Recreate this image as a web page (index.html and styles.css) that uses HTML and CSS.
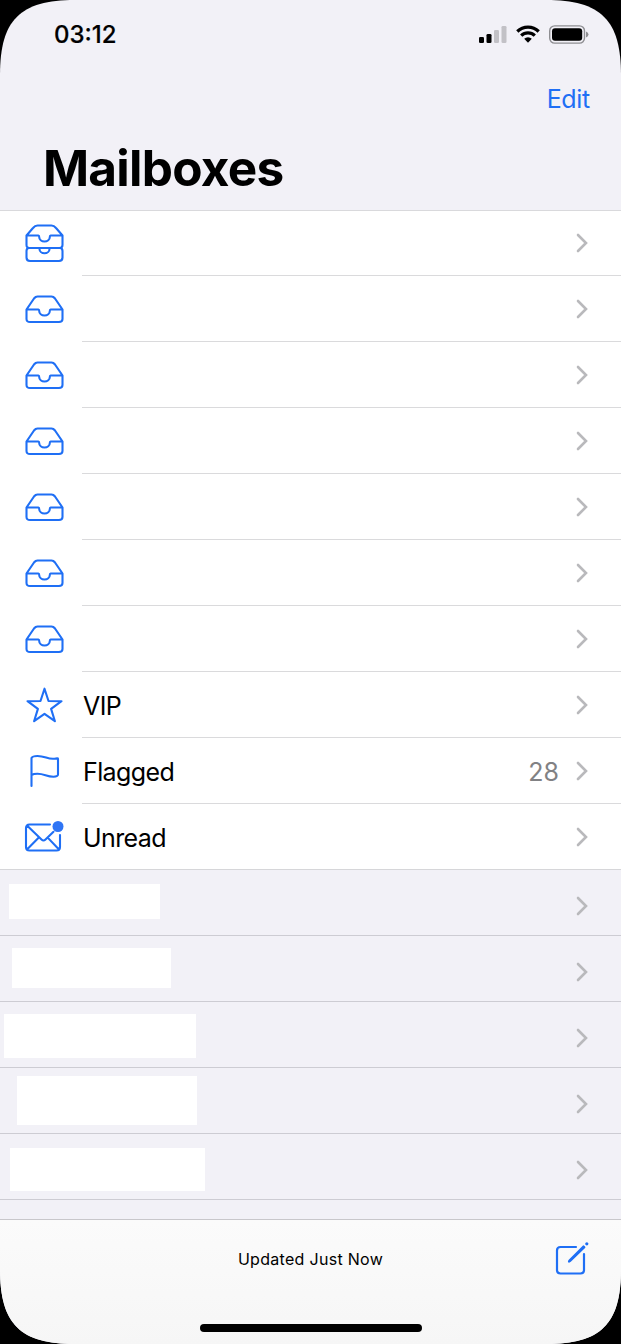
FILE: index.html
```html
<!DOCTYPE html>
<html lang="en">
<head>
  <meta charset="UTF-8" />
  <meta name="viewport" content="width=device-width, initial-scale=1.0"/>
  <title>Mailboxes</title>
  <link rel="stylesheet" href="styles.css">
</head>
<body>
  <!-- Shared icons -->
  <svg class="sprite" width="0" height="0">
    <symbol id="inbox" viewBox="0 0 40 40">
      <path d="M2.500 20.500 10 9.500Q11.500 7.500 13.500 7.500h14q2 0 3.500 2L38.500 20.500V30q0 3-3.500 3h-29Q2.500 33 2.500 30zM3 20.500H14.500q.7 0 .7 1.500a5.300 4.500 0 0 0 10.600 0q0-1.500.7-1.500h11.500"/>
    </symbol>
    <symbol id="all-inboxes" viewBox="0 0 40 40">
      <path d="M2.500 11.500 9 4Q11 1.500 13.500 1.500h14q2.500 0 4.500 2.500L38.500 11.500v9.500q0 3-3 3h-30q-3 0-3-3zM3 11.500H14.500q.7 0 .7 1.500a5.300 4.500 0 0 0 10.600 0q0-1.500.7-1.500h11.500M4.500 24q-2 .5-2 3v6.500q0 3.500 3.500 3.500h29q3.500 0 3.500-3.500v-6.500q0-2.500-2-3M15.500 25a5 4.300 0 0 0 10 0"/>
    </symbol>
    <symbol id="chevron" viewBox="0 0 12 20">
      <path d="M2 2l8 8-8 8"/>
    </symbol>
  </svg>

  <div class="screen">
    <header>
      <div class="status">
        <span class="time">03:12</span>
        <div class="indicators">
          <svg class="signal" width="28" height="18" viewBox="0 0 28 18">
            <rect x="0" y="12" width="5" height="6" rx="1.300"/>
            <rect x="7.500" y="9" width="5" height="9" rx="1.300"/>
            <rect class="off" x="15" y="5" width="5" height="13" rx="1.300"/>
            <rect class="off" x="22.500" y="1" width="5" height="17" rx="1.300"/>
          </svg>
          <svg class="wifi" width="24" height="18" viewBox="0 0 24 18">
            <path d="M1.300 6.500a15.200 15.200 0 0 1 21.400 0M5.200 10.600a9.700 9.700 0 0 1 13.600 0"/>
            <path class="dot" d="M8.200 13.800a5.500 5.500 0 0 1 7.600 0L12 17.700z"/>
          </svg>
          <svg class="battery" width="40" height="19" viewBox="0 0 40 19">
            <rect class="shell" x=".7" y=".9" width="34.800" height="17.200" rx="5"/>
            <rect x="3" y="3.200" width="30.200" height="12.600" rx="3"/>
            <path class="cap" d="M37 6.500q2.500.8 2.500 3t-2.500 3z"/>
          </svg>
        </div>
      </div>
      <a class="edit" href="#">Edit</a>
      <h1>Mailboxes</h1>
    </header>

    <main>
      <ul class="mailboxes">
        <li><svg class="icon"><use href="#all-inboxes"/></svg><div class="row"><svg class="chevron"><use href="#chevron"/></svg></div></li>
        <li><svg class="icon"><use href="#inbox"/></svg><div class="row"><svg class="chevron"><use href="#chevron"/></svg></div></li>
        <li><svg class="icon"><use href="#inbox"/></svg><div class="row"><svg class="chevron"><use href="#chevron"/></svg></div></li>
        <li><svg class="icon"><use href="#inbox"/></svg><div class="row"><svg class="chevron"><use href="#chevron"/></svg></div></li>
        <li><svg class="icon"><use href="#inbox"/></svg><div class="row"><svg class="chevron"><use href="#chevron"/></svg></div></li>
        <li><svg class="icon"><use href="#inbox"/></svg><div class="row"><svg class="chevron"><use href="#chevron"/></svg></div></li>
        <li><svg class="icon"><use href="#inbox"/></svg><div class="row"><svg class="chevron"><use href="#chevron"/></svg></div></li>
        <li>
          <svg class="icon" viewBox="0 0 40 40"><path d="M20.500 3.700l4 12.300 13 .2-10.400 7.700 3.800 12.300L20.500 28.800 10.100 36.200l3.800-12.300L3.500 16.200l13-.2z"/></svg>
          <div class="row"><span>VIP</span><svg class="chevron"><use href="#chevron"/></svg></div>
        </li>
        <li>
          <svg class="icon" viewBox="0 0 40 40"><path d="M7.500 35V7Q8.500 5 13.500 5c8 0 10 3.500 17 2.700q3.500-.7 3.500 0V23.500q0 2-4.500 2.200c-7 0-9-2.900-16-2.900q-4 0-6 1.200"/></svg>
          <div class="row"><span>Flagged</span><span class="count">28</span><svg class="chevron"><use href="#chevron"/></svg></div>
        </li>
        <li>
          <svg class="icon" viewBox="0 0 40 40"><path d="M26 7.500H5.500Q2 7.500 2 11v19q0 3.500 3.500 3.500h27q3.500 0 3.500-3.500V18M3 8.500l14.500 14q2 2 4 0l8-7.700M3 32.500 14.800 20.600M35 32.500 23.700 20.600"/><circle class="badge" cx="34" cy="9.500" r="5.500"/></svg>
          <div class="row"><span>Unread</span><svg class="chevron"><use href="#chevron"/></svg></div>
        </li>
      </ul>

      <ul class="accounts">
        <li><span class="mask mask-1"></span><svg class="chevron"><use href="#chevron"/></svg></li>
        <li><span class="mask mask-2"></span><svg class="chevron"><use href="#chevron"/></svg></li>
        <li><span class="mask mask-3"></span><svg class="chevron"><use href="#chevron"/></svg></li>
        <li><span class="mask mask-4"></span><svg class="chevron"><use href="#chevron"/></svg></li>
        <li><span class="mask mask-5"></span><svg class="chevron"><use href="#chevron"/></svg></li>
      </ul>
    </main>

    <footer>
      <div class="toolbar">
        <p>Updated Just Now</p>
        <svg class="compose" width="36" height="36" viewBox="0 0 36 36"><path d="M23 6H7.500Q4 6 4 9.500V29q0 3.500 3.500 3.500h20q3.500 0 3.500-3.500V13"/><path class="pen" d="M16 20.500l.5-1L30.500 5.500l.8.8-14 13.500z"/><circle class="tip" cx="33.800" cy="2.800" r="1.600"/></svg>
      </div>
      <div class="home-bar"></div>
    </footer>
  </div>
</body>
</html>
```
FILE: styles.css
```css
* { margin: 0; padding: 0; box-sizing: border-box; font-family: 'Inter', 'Liberation Sans', sans-serif; }
body { background: #000; color: #000; }

.sprite { display: block; }
.screen {
  width: 621px; height: 1344px; background: #f2f1f7; display: flex; flex-direction: column;
  clip-path: path('M0 75C0 20 20 0 75 0H546C601 0 621 20 621 75V1269C621 1324 601 1344 546 1344H75C20 1344 0 1324 0 1269Z');
}

header { height: 211px; border-bottom: 1px solid #d9d9dc; display: flex; flex-direction: column; }
.status { height: 68px; padding: 0 32px 0 54px; display: flex; justify-content: space-between; align-items: center; }
.time { font-size: 24px; font-weight: 500; -webkit-text-stroke: 0.2px #000; }
.indicators { display: flex; align-items: center; gap: 9px; }
.signal .off { fill: #c2c1c6; }
.wifi path { fill: none; stroke: #000; stroke-width: 3.2; }
.wifi .dot { fill: #000; stroke: none; }
.battery .shell { fill: none; stroke: #8e8e92; stroke-width: 1.4; }
.battery .cap { fill: #8e8e92; }

.edit { align-self: flex-end; margin-right: 31px; line-height: 62px; font-size: 25px; letter-spacing: -0.3px; color: #1f6ff5; text-decoration: none; }
h1 { margin-left: 43px; font-size: 49.5px; font-weight: 700; line-height: 76px; letter-spacing: -0.75px; }

ul { list-style: none; }
.mailboxes { background: #fff; border-bottom: 1px solid #d6d6d9; }
.mailboxes li { height: 66px; display: flex; align-items: center; padding-left: 24px; }
.mailboxes li:first-child { height: 65px; }
.mailboxes li:last-child { height: 65px; }
.icon { width: 40px; height: 40px; margin-right: 18px; flex: none; fill: none; stroke: #1f6ff5; stroke-width: 2.1; stroke-linejoin: round; stroke-linecap: round; }
.badge { fill: #2f75f5; stroke: none; }
.row { flex: 1; height: 100%; border-bottom: 1px solid #dadadc; display: flex; align-items: center; padding: 0 33px 0 1px; font-size: 25px; letter-spacing: -0.6px; }
.row span { padding-top: 2px; }
.mailboxes li:last-child .row { border-bottom: none; }
.chevron { width: 12px; height: 20px; margin-left: auto; fill: none; stroke: #b9b9bc; stroke-width: 2.6; stroke-linecap: round; stroke-linejoin: miter; }
.count { margin-left: auto; color: #818184; letter-spacing: 0; }
.count + .chevron { margin-left: 17px; }

.accounts li { height: 66px; border-bottom: 1px solid #cdccd3; display: flex; align-items: flex-start; padding-right: 33px; }
.accounts .chevron { margin-top: 26px; }
.mask { background: #fff; }
.mask-1 { width: 151px; height: 35px; margin: 14px 0 0 9px; }
.mask-2 { width: 159px; height: 40px; margin: 12px 0 0 12px; }
.mask-3 { width: 192px; height: 44px; margin: 12px 0 0 4px; }
.mask-4 { width: 180px; height: 49px; margin: 8px 0 0 17px; }
.mask-5 { width: 195px; height: 43px; margin: 14px 0 0 10px; }

footer {
  height: 125px; margin-top: auto; border-top: 1px solid #c8c7cb;
  background: linear-gradient(#fbfbfb, #f6f6f6); display: flex; flex-direction: column;
}
.toolbar { height: 78px; display: grid; grid-template-columns: 1fr auto 1fr; align-items: center; padding: 0 31px; }
.toolbar p { grid-column: 2; font-size: 16px; letter-spacing: 0.3px; }
.compose { justify-self: end; margin-right: 1px; fill: none; stroke: #1f6ff5; stroke-width: 2.2; stroke-linejoin: round; stroke-linecap: round; }
.compose .pen { fill: #1f6ff5; }
.compose .tip { fill: #1f6ff5; stroke: none; }
.home-bar { width: 222px; height: 8px; margin: 26px auto 0; border-radius: 4px; background: #000; }
```
